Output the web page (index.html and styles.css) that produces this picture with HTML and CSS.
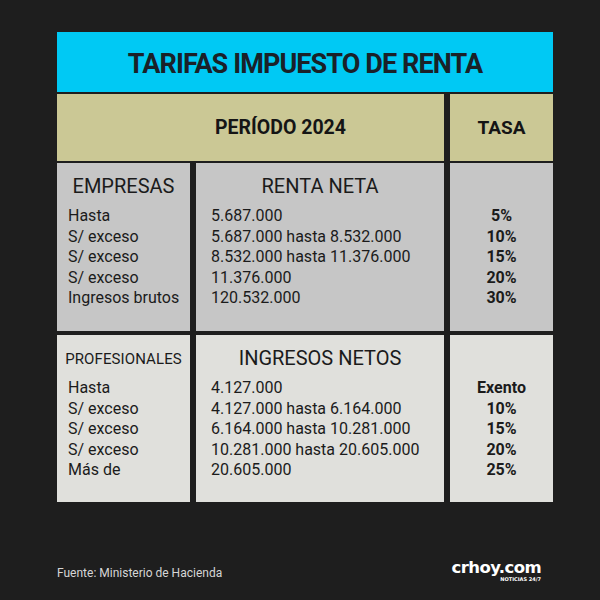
FILE: index.html
```html
<!DOCTYPE html>
<html lang="es">
<head>
<meta charset="utf-8">
<title>Tarifas impuesto de renta</title>
<link rel="stylesheet" href="styles.css">
</head>
<body>
<div class="sheet">
  <div class="title">TARIFAS IMPUESTO DE RENTA</div>
  <div class="head">
    <div class="period">PERÍODO 2024</div>
    <div class="tasa">TASA</div>
  </div>
  <div class="row r1">
    <div class="cell c1">
      <div class="h">EMPRESAS</div>
      <div class="l">Hasta</div>
      <div class="l">S/ exceso</div>
      <div class="l">S/ exceso</div>
      <div class="l">S/ exceso</div>
      <div class="l">Ingresos brutos</div>
    </div>
    <div class="cell c2">
      <div class="h">RENTA NETA</div>
      <div class="l">5.687.000</div>
      <div class="l">5.687.000 hasta 8.532.000</div>
      <div class="l">8.532.000 hasta 11.376.000</div>
      <div class="l">11.376.000</div>
      <div class="l">120.532.000</div>
    </div>
    <div class="cell c3">
      <div class="h"></div>
      <div class="l">5%</div>
      <div class="l">10%</div>
      <div class="l">15%</div>
      <div class="l">20%</div>
      <div class="l">30%</div>
    </div>
  </div>
  <div class="row r2">
    <div class="cell c1">
      <div class="h small">PROFESIONALES</div>
      <div class="l">Hasta</div>
      <div class="l">S/ exceso</div>
      <div class="l">S/ exceso</div>
      <div class="l">S/ exceso</div>
      <div class="l">Más de</div>
    </div>
    <div class="cell c2">
      <div class="h">INGRESOS NETOS</div>
      <div class="l">4.127.000</div>
      <div class="l">4.127.000 hasta 6.164.000</div>
      <div class="l">6.164.000 hasta 10.281.000</div>
      <div class="l">10.281.000 hasta 20.605.000</div>
      <div class="l">20.605.000</div>
    </div>
    <div class="cell c3">
      <div class="h"></div>
      <div class="l">Exento</div>
      <div class="l">10%</div>
      <div class="l">15%</div>
      <div class="l">20%</div>
      <div class="l">25%</div>
    </div>
  </div>
  <div class="footer">
    <div class="source">Fuente: Ministerio de Hacienda</div>
    <div class="logo">
      <div class="logo-main">crhoy.com</div>
      <div class="logo-sub">NOTICIAS 24/7</div>
    </div>
  </div>
</div>
</body>
</html>
```

FILE: styles.css
```css
html, body {
  margin: 0;
  padding: 0;
  background: #1e1e1e;
}
body {
  width: 600px;
  height: 600px;
  overflow: hidden;
  font-family: Roboto, "Open Sans", sans-serif;
  color: #1b1b1b;
}
.sheet {
  width: 496px;
  margin: 32px 0 0 57px;
  display: flex;
  flex-direction: column;
}
.title {
  height: 60px;
  background: #00c9f4;
  display: flex;
  align-items: center;
  justify-content: center;
  padding-top: 4px;
  box-sizing: border-box;
  font-weight: 700;
  font-size: 27px;
  letter-spacing: -0.9px;
  color: #1a2128;
}
.head {
  margin-top: 2px;
  height: 67px;
  display: grid;
  grid-template-columns: 387px 103px;
  column-gap: 6px;
}
.period, .tasa {
  background: #cbc895;
  display: flex;
  align-items: center;
  justify-content: center;
  font-weight: 700;
  font-size: 19.5px;
  color: #151515;
}
.period {
  padding-left: 60px;
}
.tasa {
  font-size: 19px;
}
.row {
  display: grid;
  grid-template-columns: 133px 248px 103px;
  column-gap: 6px;
}
.r1 {
  margin-top: 2px;
  height: 168px;
}
.r2 {
  margin-top: 4px;
  height: 167px;
}
.r1 .cell {
  background: #c6c6c6;
}
.r2 .cell {
  background: #e0e0dc;
}
.cell {
  padding-top: 11px;
  box-sizing: border-box;
}
.h {
  height: 24px;
  line-height: 24px;
  font-size: 20px;
  text-align: center;
  margin-bottom: 8px;
  color: #1b1b1b;
}
.h.small {
  font-size: 15px;
  line-height: 26px;
  letter-spacing: 0.1px;
}
.l {
  font-size: 16px;
  line-height: 20.5px;
  white-space: nowrap;
}
.c1 {
  padding-left: 11px;
}
.c1 .h {
  margin-left: -11px;
}
.c2 {
  padding-left: 15px;
}
.c2 .h {
  margin-left: -15px;
}
.c3 .l {
  text-align: center;
  font-weight: 700;
}
.footer {
  margin-top: 58px;
  display: flex;
  justify-content: space-between;
  align-items: flex-start;
  padding-right: 12px;
}
.source {
  margin-top: 6px;
  font-size: 12px;
  color: #d6d6d6;
}
.logo {
  display: flex;
  flex-direction: column;
  align-items: flex-end;
  color: #ffffff;
  font-family: "DejaVu Sans", sans-serif;
  font-weight: 700;
}
.logo-main {
  font-size: 16.5px;
  line-height: 15px;
  letter-spacing: -0.6px;
}
.logo-sub {
  font-size: 5px;
  line-height: 6px;
  margin-top: 1px;
  letter-spacing: 0;
}
```
